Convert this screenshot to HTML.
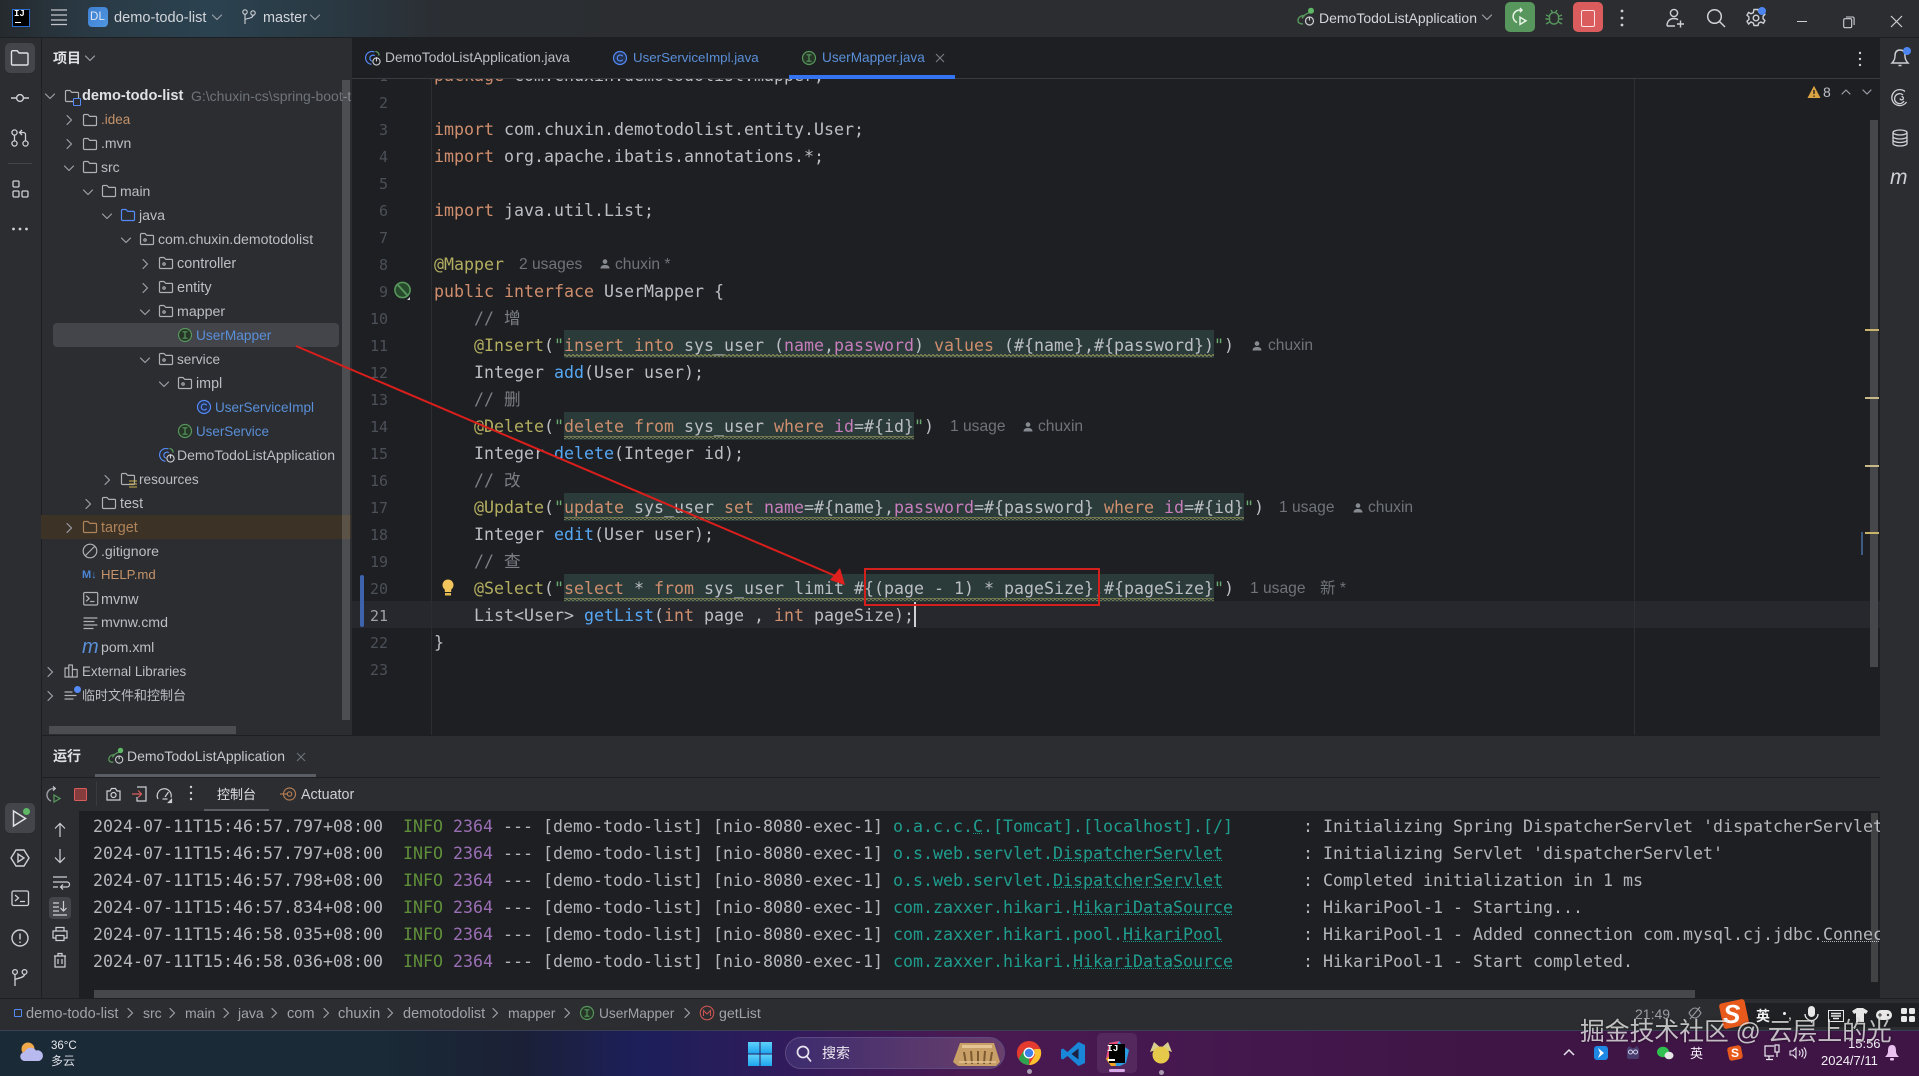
<!DOCTYPE html>
<html lang="zh"><head><meta charset="utf-8"><title>demo-todo-list</title>
<style>
html,body{margin:0;padding:0;width:1919px;height:1076px;overflow:hidden;background:#1e1f22}
body{position:relative;font-family:"Liberation Sans","Noto Sans CJK SC",sans-serif;font-size:14px;color:#bcbec4}
.b{position:absolute}
.t{position:absolute;white-space:pre;line-height:24px}
svg{position:absolute;overflow:visible}
.i{width:16px;height:16px;fill:none;stroke:#afb1b3;stroke-width:1.2;stroke-linecap:round;stroke-linejoin:round}
.c{width:16px;height:16px;fill:none;stroke:#9da0a8;stroke-width:1.2;stroke-linecap:round;stroke-linejoin:round}
.l{position:absolute;left:434px;height:27px;line-height:27px;white-space:pre;font-family:"DejaVu Sans Mono","Noto Sans CJK SC",monospace;font-size:16.62px;color:#bcbec4}
.n{position:absolute;left:352px;width:36px;text-align:right;height:27px;line-height:28px;font-family:"DejaVu Sans Mono",monospace;font-size:15px;color:#4b5059}
.k{color:#cf8e6d}.a{color:#b3ae60}.m{color:#56a8f5}.p{color:#c77dbb}.g{color:#6aab73}.co{color:#7a7e85}
.h{position:absolute;white-space:pre;height:27px;line-height:27px;font-size:15.6px;color:#6f737a}
.o{position:absolute;left:93px;height:27px;line-height:27px;white-space:pre;font-family:"DejaVu Sans Mono",monospace;font-size:16.62px;color:#b4b6bb}
.ci{color:#5f8f3a}.cp{color:#9a6fb5}.cc{color:#1f9d8f}.u{text-decoration:underline dotted 1px}
.s{position:absolute;top:1002px;line-height:24px;font-size:14px;color:#a0a3a9;white-space:pre}
</style></head><body>
<svg width="0" height="0" style="position:absolute"><defs>
<symbol id="fold" viewBox="0 0 16 16"><path d="M1.5 3.5a1 1 0 0 1 1-1h3.500l1.700 1.900h5.800a1 1 0 0 1 1 1v7.100a1 1 0 0 1-1 1H2.500a1 1 0 0 1-1-1z"/></symbol>
<symbol id="pkg" viewBox="0 0 16 16"><path d="M1.5 3.5a1 1 0 0 1 1-1h3.500l1.700 1.900h5.800a1 1 0 0 1 1 1v7.100a1 1 0 0 1-1 1H2.500a1 1 0 0 1-1-1z"/><circle cx="6" cy="9" r="1.2"/></symbol>
<symbol id="cr" viewBox="0 0 16 16"><path d="M6 3.500 10.500 8 6 12.500"/></symbol>
<symbol id="cd" viewBox="0 0 16 16"><path d="M3.500 6 8 10.500 12.500 6"/></symbol>
<symbol id="int" viewBox="0 0 16 16"><circle cx="8" cy="8" r="6.500" fill="#253627" stroke="#57965c" stroke-width="1.2"/><path d="M6 4.800h4M6 11.200h4M8 4.800v6.400" stroke="#57965c" stroke-width="1.2" fill="none"/></symbol>
<symbol id="cls" viewBox="0 0 16 16"><circle cx="8" cy="8" r="6.500" fill="#25324d" stroke="#548af7" stroke-width="1.2"/><path d="M10.400 5.900A3 3 0 1 0 10.400 10.100" stroke="#548af7" stroke-width="1.2" fill="none"/></symbol>
<symbol id="app" viewBox="0 0 16 16"><path d="M9 1.800A6.400 6.400 0 1 0 6 14.200" fill="none" stroke="#548af7" stroke-width="1.2"/><path d="M9.400 5.500A3 3 0 1 0 6.500 11" fill="none" stroke="#548af7" stroke-width="1.2"/><path d="M11 1.500a4 4 0 0 1 3 3.500" stroke="#57965c" stroke-width="1.4" fill="none"/><circle cx="11.500" cy="11.500" r="3.600" fill="none" stroke="#ced0d6" stroke-width="1.1"/><path d="M11.500 7.500v3.500" stroke="#ced0d6" stroke-width="1.1"/></symbol>
<symbol id="runapp" viewBox="0 0 20 20"><path d="M9 8.500C4 8.500 2 11 2 13.500s2 3.500 5 3.500" fill="none" stroke="#57965c" stroke-width="1.4"/><path d="M6 11.500c2-4 5-5 8-6" fill="none" stroke="#57965c" stroke-width="1.4"/><circle cx="15" cy="3.800" r="3" fill="#5fb865" stroke="none"/><circle cx="13.500" cy="14" r="4" fill="none" stroke="#ced0d6" stroke-width="1.2"/><path d="M13.500 9.500v4" stroke="#ced0d6" stroke-width="1.2"/></symbol>
<symbol id="user" viewBox="0 0 12 12"><circle cx="6" cy="3.600" r="2.300" fill="#868a91"/><path d="M1.500 10.500c0-2.600 2-3.500 4.500-3.500s4.500.9 4.500 3.500z" fill="#868a91"/></symbol>
<pattern id="wave" width="4" height="3" patternUnits="userSpaceOnUse"><path d="M0 1.500Q1 0 2 1.500T4 1.500" fill="none" stroke="#a9a35e" stroke-width=".9"/></pattern>
</defs></svg>

<!-- title bar -->
<div class="b" style="left:0;top:0;width:1919px;height:37px;background:linear-gradient(90deg,#252a2e 0,#2a3a45 90px,#2b4250 210px,#2a3a44 320px,#2b2e33 440px,#2b2d30 700px)"></div>
<div class="b" style="left:0;top:37px;width:1919px;height:1px;background:#1e1f22"></div>
<div class="b" style="left:12px;top:9px;width:16px;height:16px;background:#000;border:.5px solid #2d6fd0"></div>
<div class="t" style="left:14px;top:7px;font:bold 9px/14px 'Liberation Mono',monospace;color:#fff">IJ</div>
<div class="b" style="left:15px;top:22px;width:6px;height:1px;background:#fff"></div>
<svg style="left:51px;top:9px" width="16" height="16" fill="none" stroke="#c4c6cc" stroke-width="1.2"><path d="M0 1h16M0 6h16M0 11h16M0 15.500h16"/></svg>
<div class="b" style="left:88px;top:7px;width:20px;height:20px;border-radius:4px;background:linear-gradient(135deg,#3f7fd1,#4f96e0)"></div>
<div class="t" style="left:90px;top:5px;font-size:11.5px;color:#dfe8f5;letter-spacing:.2px">DL</div>
<div class="t" style="left:114px;top:6px;color:#d3d5db;font-size:14.6px">demo-todo-list</div>
<svg class="c" style="left:209px;top:9px"><use href="#cd"/></svg>
<svg style="left:242px;top:9px" width="14" height="16" fill="none" stroke="#ced0d6" stroke-width="1.1"><circle cx="3" cy="3" r="2.200"/><circle cx="11" cy="4" r="2.200"/><path d="M3 5.200V15M3 11c0-2 8-1 8-4.800"/></svg>
<div class="t" style="left:263px;top:6px;color:#d3d5db;font-size:14.4px">master</div>
<svg class="c" style="left:307px;top:9px"><use href="#cd"/></svg>

<svg style="left:1296px;top:7px" width="20" height="20"><use href="#runapp"/></svg>
<div class="t" style="left:1319px;top:6px;color:#d3d5db;font-size:14px">DemoTodoListApplication</div>
<svg class="c" style="left:1479px;top:9px"><use href="#cd"/></svg>
<div class="b" style="left:1505px;top:2px;width:30px;height:30px;border-radius:5px;background:#57965c"></div>
<svg style="left:1510px;top:7px" width="20" height="20" fill="none" stroke="#e6f2e6" stroke-width="1.5"><path d="M11 3.200A6.500 6.500 0 0 0 7 15.500"/><path d="M10 1l2 2.200-2.200 2"/><path d="M10 10.200l6 3.600-6 3.600z"/></svg>
<svg style="left:1545px;top:8px" width="18" height="18" fill="none" stroke="#57965c" stroke-width="1.4"><rect x="4.500" y="4.500" width="9" height="11.500" rx="4.200"/><path d="M6 2l1.500 2.500M12 2l-1.500 2.500M1 7l3.500 1.500M17 7l-3.500 1.500M.5 11h4M17.500 11h-4M1 16l3.500-2M17 16l-3.500-2"/></svg>
<div class="b" style="left:1573px;top:2px;width:30px;height:30px;border-radius:5px;background:#db5c5c"></div>
<div class="b" style="left:1581px;top:10px;width:12px;height:15px;border:1.4px solid #f7e4e4;border-radius:2px"></div>
<svg style="left:1616px;top:8px" width="12" height="20" fill="#ced0d6"><circle cx="6" cy="3" r="1.400"/><circle cx="6" cy="10" r="1.400"/><circle cx="6" cy="17" r="1.400"/></svg>
<svg style="left:1666px;top:8px" width="20" height="20" fill="none" stroke="#ced0d6" stroke-width="1.4"><circle cx="8" cy="5" r="3.600"/><path d="M1 18c0-5 3-7.500 7-7.500 1.500 0 3 .4 4 1.200M1 18h8M14.500 12.500v7M11 16h7"/></svg>
<svg style="left:1706px;top:8px" width="20" height="20" fill="none" stroke="#ced0d6" stroke-width="1.5"><circle cx="8.500" cy="8.500" r="6.800"/><path d="M13.500 13.500l5.500 5.500"/></svg>
<svg style="left:1746px;top:8px" width="20" height="20" fill="none" stroke="#ced0d6" stroke-width="1.4"><path d="M8 1.500h4l.7 2.500 2.400 1 2.300-1.300 1.500 2.700-1.800 1.800v2.600l1.800 1.800-1.500 2.700-2.300-1.300-2.400 1-.7 2.500H8l-.7-2.500-2.400-1L2.600 16 1 13.300 2.900 11.500V8.900L1 7.100 2.600 4.400 4.900 5.700l2.400-1z"/><circle cx="10" cy="10" r="2.800"/></svg>
<div class="b" style="left:1758px;top:7px;width:8px;height:8px;border-radius:50%;background:#4d85f0"></div>
<div class="b" style="left:1797px;top:21px;width:10px;height:1.3px;background:#ced0d6"></div>
<svg style="left:1843px;top:16px" width="12" height="12" fill="none" stroke="#ced0d6" stroke-width="1.1"><rect x=".7" y="2.700" width="8" height="9" rx="1.400"/><path d="M3 1h6.600a1.500 1.500 0 0 1 1.500 1.500V9"/></svg>
<svg style="left:1891px;top:16px" width="11" height="11" fill="none" stroke="#ced0d6" stroke-width="1.2"><path d="M0 0l11 11M11 0L0 11"/></svg>

<!-- left stripe -->
<div class="b" style="left:0;top:38px;width:41px;height:960px;background:#2b2d30"></div>
<div class="b" style="left:41px;top:38px;width:1px;height:960px;background:#1e1f22"></div>
<div class="b" style="left:5px;top:43px;width:30px;height:30px;border-radius:5px;background:#43454a"></div>
<svg style="left:10px;top:49px" width="20" height="18" fill="none" stroke="#dfe1e5" stroke-width="1.4"><path d="M1.500 3a1.300 1.300 0 0 1 1.300-1.300h4.300l2 2.300h7.600A1.300 1.300 0 0 1 18 5.300v9.400A1.300 1.300 0 0 1 16.700 16H2.800a1.300 1.300 0 0 1-1.300-1.300z"/></svg>
<svg style="left:10px;top:88px" width="20" height="20" fill="none" stroke="#ced0d6" stroke-width="1.4"><circle cx="10" cy="10" r="3.400"/><path d="M1 10h5.600M13.400 10H19"/></svg>
<svg style="left:11px;top:129px" width="18" height="18" fill="none" stroke="#ced0d6" stroke-width="1.3"><circle cx="3.500" cy="3.500" r="2.600"/><circle cx="3.500" cy="14.500" r="2.600"/><circle cx="14.500" cy="14.500" r="2.600"/><path d="M3.500 6.200v5.600M14.500 12V5.500a2 2 0 0 0-2-2H9M11 1L8.500 3.500 11 6"/></svg>
<div class="b" style="left:8px;top:163px;width:24px;height:1px;background:#43454a"></div>
<svg style="left:11px;top:180px" width="18" height="18" fill="none" stroke="#ced0d6" stroke-width="1.3"><rect x="2" y="1" width="6" height="6" rx="1.200"/><rect x="2" y="11" width="6" height="6" rx="1.200"/><rect x="11" y="11" width="6" height="6" rx="1.200"/></svg>
<svg style="left:11px;top:226px" width="18" height="6" fill="#ced0d6"><circle cx="2.500" cy="3" r="1.400"/><circle cx="9" cy="3" r="1.400"/><circle cx="15.500" cy="3" r="1.400"/></svg>

<div class="b" style="left:5px;top:803px;width:30px;height:30px;border-radius:5px;background:#43454a"></div>
<svg style="left:12px;top:809px" width="20" height="20" fill="none" stroke="#dfe1e5" stroke-width="1.5"><path d="M1.500 2v15l12-7.500z"/></svg>
<div class="b" style="left:23px;top:808px;width:7px;height:7px;border-radius:50%;background:#5fb865"></div>
<svg style="left:10px;top:848px" width="20" height="20" fill="none" stroke="#ced0d6" stroke-width="1.4"><path d="M6 2h8l5 8-5 8H6L1 10z"/><path d="M8 6v8l6-4z"/></svg>
<svg style="left:11px;top:889px" width="18" height="18" fill="none" stroke="#ced0d6" stroke-width="1.3"><rect x="1" y="2" width="16.500" height="14.500" rx="1.500"/><path d="M4 6l3.500 3L4 12M9 12.500h5"/></svg>
<svg style="left:11px;top:929px" width="18" height="18" fill="none" stroke="#ced0d6" stroke-width="1.4"><circle cx="9" cy="9" r="8"/><path d="M9 4.500v6M9 12.500v1.500"/></svg>
<svg style="left:12px;top:969px" width="16" height="18" fill="none" stroke="#ced0d6" stroke-width="1.3"><circle cx="3" cy="3" r="2.400"/><circle cx="12.500" cy="3" r="2.400"/><path d="M3 5.400V17M3 11c0-2 9.500-1.500 9.500-5.600"/></svg>

<!-- project panel -->
<div class="b" style="left:42px;top:38px;width:310px;height:697px;background:#2b2d30"></div>
<div class="t" style="left:53px;top:46px;font-weight:bold;color:#dfe1e5;font-size:14px">项目</div>
<svg class="c" style="left:82px;top:50px"><use href="#cd"/></svg>
<div class="b" style="left:41px;top:515px;width:310px;height:24px;background:#3c3226"></div>
<div class="b" style="left:53px;top:323px;width:286px;height:24px;border-radius:4px;background:#43454a"></div>
<div class="b" style="left:49px;top:726px;width:187px;height:8px;background:#4b4d51"></div>

<div class="b" style="left:0;top:1px">
<svg class="c" style="left:42px;top:87px"><use href="#cd"/></svg><svg class="i" style="left:64px;top:87px"><use href="#fold"/></svg><div class="b" style="left:73px;top:97px;width:6px;height:6px;border:1px solid #548af7;border-radius:1px;background:#2b2d30"></div>
<div class="t" style="left:82px;top:83px;font-weight:bold;color:#dfe1e5;font-size:14.6px">demo-todo-list</div><div class="t" style="left:191px;top:83px;color:#6f737a;width:160px;overflow:hidden;font-size:14px">G:\chuxin-cs\spring-boot-todo</div>
<svg class="c" style="left:61px;top:111px"><use href="#cr"/></svg><svg class="i" style="left:82px;top:111px"><use href="#fold"/></svg><div class="t" style="left:101px;top:107px;color:#c5926a;font-size:13.5px">.idea</div>
<svg class="c" style="left:61px;top:135px"><use href="#cr"/></svg><svg class="i" style="left:82px;top:135px"><use href="#fold"/></svg><div class="t" style="left:101px;top:130px;font-size:14px">.mvn</div>
<svg class="c" style="left:61px;top:159px"><use href="#cd"/></svg><svg class="i" style="left:82px;top:158px"><use href="#fold"/></svg><div class="t" style="left:101px;top:154px;font-size:14px">src</div>
<svg class="c" style="left:80px;top:183px"><use href="#cd"/></svg><svg class="i" style="left:101px;top:182px"><use href="#fold"/></svg><div class="t" style="left:120px;top:178px;font-size:14px">main</div>
<svg class="c" style="left:99px;top:207px"><use href="#cd"/></svg><svg class="i" style="left:120px;top:206px;stroke:#548af7"><use href="#fold"/></svg><div class="t" style="left:139px;top:203px;font-size:14.2px">java</div>
<svg class="c" style="left:118px;top:231px"><use href="#cd"/></svg><svg class="i" style="left:139px;top:230px"><use href="#pkg"/></svg><div class="t" style="left:158px;top:226px;font-size:14.1px">com.chuxin.demotodolist</div>
<svg class="c" style="left:137px;top:255px"><use href="#cr"/></svg><svg class="i" style="left:158px;top:254px"><use href="#pkg"/></svg><div class="t" style="left:177px;top:251px;font-size:14.4px">controller</div>
<svg class="c" style="left:137px;top:279px"><use href="#cr"/></svg><svg class="i" style="left:158px;top:278px"><use href="#pkg"/></svg><div class="t" style="left:177px;top:275px;font-size:14.5px">entity</div>
<svg class="c" style="left:137px;top:303px"><use href="#cd"/></svg><svg class="i" style="left:158px;top:302px"><use href="#pkg"/></svg><div class="t" style="left:177px;top:299px;font-size:14.2px">mapper</div>
<svg class="i" style="left:177px;top:326px"><use href="#int"/></svg><div class="t" style="left:196px;top:323px;color:#5a8fd8;font-size:13.7px">UserMapper</div>
<svg class="c" style="left:137px;top:351px"><use href="#cd"/></svg><svg class="i" style="left:158px;top:350px"><use href="#pkg"/></svg><div class="t" style="left:177px;top:347px;font-size:13.6px">service</div>
<svg class="c" style="left:156px;top:375px"><use href="#cd"/></svg><svg class="i" style="left:177px;top:374px"><use href="#pkg"/></svg><div class="t" style="left:196px;top:371px;font-size:14.3px">impl</div>
<svg class="i" style="left:196px;top:398px"><use href="#cls"/></svg><div class="t" style="left:215px;top:395px;color:#5a8fd8;font-size:13.5px">UserServiceImpl</div>
<svg class="i" style="left:177px;top:422px"><use href="#int"/></svg><div class="t" style="left:196px;top:419px;color:#5a8fd8;font-size:13.4px">UserService</div>
<svg class="i" style="left:159px;top:446px"><use href="#app"/></svg><div class="t" style="left:177px;top:442px;font-size:14px">DemoTodoListApplication</div>
<svg class="c" style="left:99px;top:471px"><use href="#cr"/></svg><svg class="i" style="left:120px;top:470px"><use href="#fold"/></svg><svg style="left:129px;top:479px" width="8" height="8" stroke="#c9b04d" stroke-width="1"><path d="M0 1h8M0 4h8M0 7h8"/></svg><div class="t" style="left:139px;top:467px;font-size:13.6px">resources</div>
<svg class="c" style="left:80px;top:495px"><use href="#cr"/></svg><svg class="i" style="left:101px;top:494px"><use href="#fold"/></svg><div class="t" style="left:120px;top:491px;font-size:14.3px">test</div>
<svg class="c" style="left:61px;top:519px"><use href="#cr"/></svg><svg class="i" style="left:82px;top:518px;stroke:#b0845a"><use href="#fold"/></svg><div class="t" style="left:101px;top:515px;color:#b0845a;font-size:14.4px">target</div>
<svg class="i" style="left:82px;top:542px"><circle cx="8" cy="8" r="6.800"/><path d="M3.500 12.500l9-9"/></svg><div class="t" style="left:101px;top:538px;font-size:14.1px">.gitignore</div>
<div class="t" style="left:82px;top:562px;font:bold 11px/24px 'Liberation Sans',sans-serif;color:#4d85d8">M↓</div><div class="t" style="left:101px;top:562px;color:#c5926a;font-size:13.2px">HELP.md</div>
<svg class="i" style="left:83px;top:590px"><rect x=".7" y="1.500" width="14" height="12.500" rx="1.300"/><path d="M3.500 5l2.700 2.500L3.500 10M7.500 10.500h3.500"/></svg><div class="t" style="left:101px;top:587px;font-size:14.4px">mvnw</div>
<svg class="i" style="left:83px;top:614px"><path d="M1 3h13M1 6.500h10M1 10h13M1 13.500h9"/></svg><div class="t" style="left:101px;top:610px;font-size:14.2px">mvnw.cmd</div>
<div class="t" style="left:82px;top:634px;font:italic 20px/24px 'Liberation Sans',sans-serif;color:#5a8fd8">m</div><div class="t" style="left:101px;top:634px;font-size:14.1px">pom.xml</div>
<svg class="c" style="left:42px;top:663px"><use href="#cr"/></svg><svg class="i" style="left:64px;top:662px"><path d="M1 5h3.800v9H1zM4.800 2h3.600v12H4.800zM8.400 6.500h4.800V14H8.400z"/></svg><div class="t" style="left:82px;top:659px;font-size:13.4px">External Libraries</div>
<svg class="c" style="left:42px;top:687px"><use href="#cr"/></svg><svg class="i" style="left:64px;top:686px"><path d="M1 5h7M1 8.500h11M1 12h8"/></svg><div class="b" style="left:74px;top:685px;width:7px;height:7px;border-radius:50%;background:#548af7"></div><div class="t" style="left:82px;top:683px;font-size:13px">临时文件和控制台</div>
</div>
<div class="b" style="left:342px;top:80px;width:8px;height:640px;background:rgba(255,255,255,.16)"></div>

<!-- tabs -->
<div class="b" style="left:352px;top:38px;width:1528px;height:40px;background:#1e1f22"></div>
<div class="b" style="left:352px;top:78px;width:1528px;height:1px;background:#393b40"></div>
<svg class="i" style="left:365px;top:50px"><use href="#app"/></svg><div class="t" style="left:385px;top:46px;color:#bcbec4;font-size:13.8px">DemoTodoListApplication.java</div>
<svg class="i" style="left:612px;top:50px"><use href="#cls"/></svg><div class="t" style="left:633px;top:46px;color:#5a8fd8;font-size:13.3px">UserServiceImpl.java</div>
<svg class="i" style="left:801px;top:50px"><use href="#int"/></svg><div class="t" style="left:822px;top:46px;color:#5a8fd8;font-size:13.6px">UserMapper.java</div>
<svg style="left:936px;top:54px" width="8" height="8" fill="none" stroke="#7a7e85" stroke-width="1.1"><path d="M0 0l8 8M8 0L0 8"/></svg>
<div class="b" style="left:789px;top:75px;width:166px;height:4px;background:#3574f0"></div>
<svg style="left:1856px;top:51px" width="8" height="16" fill="#ced0d6"><circle cx="4" cy="2" r="1.200"/><circle cx="4" cy="8" r="1.200"/><circle cx="4" cy="14" r="1.200"/></svg>

<!-- right stripe -->
<div class="b" style="left:1880px;top:38px;width:39px;height:960px;background:#2b2d30"></div>
<svg style="left:1890px;top:48px" width="20" height="20" fill="none" stroke="#ced0d6" stroke-width="1.4"><path d="M10 2C6 2 5 5 5 8c0 3-1 5-3 7h16c-2-2-3-4-3-7 0-3-1-6-5-6zM8.500 17.500h3"/></svg>
<div class="b" style="left:1903px;top:47px;width:8px;height:8px;border-radius:50%;background:#4d85f0"></div>
<svg style="left:1891px;top:89px" width="18" height="18" fill="none" stroke="#ced0d6" stroke-width="1.3"><path d="M14 2.500A8 8 0 1 0 15.500 13M12 6a5 5 0 1 0 1 6M9 9.500a1.700 1.700 0 1 0 1.500-2"/></svg>
<svg style="left:1892px;top:129px" width="16" height="18" fill="none" stroke="#ced0d6" stroke-width="1.3"><ellipse cx="8" cy="3.500" rx="7" ry="2.500"/><path d="M1 3.500v11c0 1.400 3.100 2.500 7 2.500s7-1.100 7-2.500v-11M1 7.500c0 1.400 3.100 2.500 7 2.500s7-1.100 7-2.500M1 11c0 1.400 3.100 2.500 7 2.500s7-1.100 7-2.500"/></svg>
<div class="t" style="left:1890px;top:166px;font:italic 21px/24px 'Liberation Sans',sans-serif;color:#ced0d6">m</div>

<!-- editor -->
<div class="b" style="left:352px;top:79px;width:1528px;height:656px;background:#1e1f22"></div>
<div class="b" style="left:352px;top:601px;width:1528px;height:27px;background:#26282e"></div>
<div class="b" style="left:431px;top:79px;width:1px;height:656px;background:#2b2d30"></div>
<div class="b" style="left:1634px;top:79px;width:1px;height:656px;background:#2e3034"></div>
<svg width="1919" height="1076" style="left:0;top:0;pointer-events:none">
<g fill="#2a3b3a"><rect x="564" y="330" width="650" height="28"/><rect x="564" y="412" width="350" height="28"/><rect x="564" y="493" width="680" height="28"/><rect x="564" y="574" width="650" height="28"/></g>
<g fill="url(#wave)"><rect x="564" y="354" width="650" height="3"/><rect x="564" y="436" width="350" height="3"/><rect x="564" y="517" width="680" height="3"/><rect x="564" y="598" width="650" height="3"/></g>
</svg>
<div class="b" style="left:360px;top:575px;width:4px;height:52px;border-radius:2px;background:#3d63ad"></div>

<div class="b" style="left:0;top:1px;width:1919px;height:734px;overflow:hidden;clip-path:inset(78px 0 0 0)">
<div class="n" style="top:61px">1</div><div class="n" style="top:88px">2</div><div class="n" style="top:115px">3</div><div class="n" style="top:142px">4</div><div class="n" style="top:169px">5</div><div class="n" style="top:196px">6</div><div class="n" style="top:223px">7</div><div class="n" style="top:250px">8</div><div class="n" style="top:277px">9</div><div class="n" style="top:304px">10</div><div class="n" style="top:331px">11</div><div class="n" style="top:358px">12</div><div class="n" style="top:385px">13</div><div class="n" style="top:412px">14</div><div class="n" style="top:439px">15</div><div class="n" style="top:466px">16</div><div class="n" style="top:493px">17</div><div class="n" style="top:520px">18</div><div class="n" style="top:547px">19</div><div class="n" style="top:574px">20</div><div class="n" style="top:601px;color:#a1a3ab">21</div><div class="n" style="top:628px">22</div><div class="n" style="top:655px">23</div>

<div class="l" style="top:61px"><span class="k">package</span> com.chuxin.demotodolist.mapper;</div>
<div class="l" style="top:115px"><span class="k">import</span> com.chuxin.demotodolist.entity.User;</div>
<div class="l" style="top:142px"><span class="k">import</span> org.apache.ibatis.annotations.*;</div>
<div class="l" style="top:196px"><span class="k">import</span> java.util.List;</div>
<div class="l" style="top:250px"><span class="a">@Mapper</span></div>
<div class="h" style="left:519px;top:250px">2 usages</div><svg style="left:599px;top:257px" width="12" height="12"><use href="#user"/></svg><div class="h" style="left:615px;top:250px">chuxin *</div>
<div class="l" style="top:277px"><span class="k">public interface</span> UserMapper {</div>
<div class="l" style="top:304px"><span class="co">    // 增</span></div>
<div class="l" style="top:331px">    <span class="a">@Insert</span>(<span class="g">"</span><span class="k">insert into</span> sys_user (<span class="p">name</span>,<span class="p">password</span>) <span class="k">values</span> (#{name},#{password})<span class="g">"</span>)</div>
<svg style="left:1251px;top:339px" width="12" height="12"><use href="#user"/></svg><div class="h" style="left:1268px;top:331px">chuxin</div>
<div class="l" style="top:358px">    Integer <span class="m">add</span>(User user);</div>
<div class="l" style="top:385px"><span class="co">    // 删</span></div>
<div class="l" style="top:412px">    <span class="a">@Delete</span>(<span class="g">"</span><span class="k">delete from</span> sys_user <span class="k">where</span> <span class="p">id</span>=#{id}<span class="g">"</span>)</div>
<div class="h" style="left:950px;top:412px">1 usage</div><svg style="left:1022px;top:420px" width="12" height="12"><use href="#user"/></svg><div class="h" style="left:1038px;top:412px">chuxin</div>
<div class="l" style="top:439px">    Integer <span class="m">delete</span>(Integer id);</div>
<div class="l" style="top:466px"><span class="co">    // 改</span></div>
<div class="l" style="top:493px">    <span class="a">@Update</span>(<span class="g">"</span><span class="k">update</span> sys_user <span class="k">set</span> <span class="p">name</span>=#{name},<span class="p">password</span>=#{password} <span class="k">where</span> <span class="p">id</span>=#{id}<span class="g">"</span>)</div>
<div class="h" style="left:1279px;top:493px">1 usage</div><svg style="left:1352px;top:501px" width="12" height="12"><use href="#user"/></svg><div class="h" style="left:1368px;top:493px">chuxin</div>
<div class="l" style="top:520px">    Integer <span class="m">edit</span>(User user);</div>
<div class="l" style="top:547px"><span class="co">    // 查</span></div>
<div class="l" style="top:574px">    <span class="a">@Select</span>(<span class="g">"</span><span class="k">select</span> * <span class="k">from</span> sys_user limit #{(page - 1) * pageSize},#{pageSize}<span class="g">"</span>)</div>
<div class="h" style="left:1250px;top:574px">1 usage</div><div class="h" style="left:1320px;top:574px">新 *</div>
<div class="l" style="top:601px">    List&lt;User&gt; <span class="m">getList</span>(<span class="k">int</span> page , <span class="k">int</span> pageSize);</div>
<div class="l" style="top:628px">}</div>
</div>
<div class="b" style="left:914px;top:602px;width:1.5px;height:25px;background:#ced0d6"></div>

<svg style="left:394px;top:281px" width="20" height="22" fill="none"><circle cx="8.500" cy="9" r="7.600" fill="#274a2c" stroke="#57965c" stroke-width="1.6"/><path d="M3.500 3.500l10 11" stroke="#57965c" stroke-width="2"/><path d="M16 16v3h-3z" fill="#ced0d6"/></svg>
<svg style="left:441px;top:579px" width="14" height="18"><path d="M7 .5a5.500 5.500 0 0 1 3.200 10v2.500H3.800v-2.500A5.500 5.500 0 0 1 7 .5z" fill="#f2c55c"/><rect x="4" y="14" width="6" height="2.500" fill="#e0b84f"/></svg>

<!-- warnings -->
<svg style="left:1807px;top:85px" width="14" height="14"><path d="M7 .8 13.500 13H.5z" fill="#d9a343"/><path d="M7 5v4M7 10.500v1.200" stroke="#1e1f22" stroke-width="1.400"/></svg>
<div class="t" style="left:1823px;top:80px;color:#bcbec4;font-size:14px">8</div>
<svg class="c" style="left:1838px;top:84px"><path d="M4 10l4-4 4 4"/></svg>
<svg class="c" style="left:1859px;top:84px"><path d="M4 6l4 4 4-4"/></svg>

<!-- editor scrollbar -->
<div class="b" style="left:1870px;top:120px;width:8px;height:547px;background:#45474b"></div>
<div class="b" style="left:1865px;top:329px;width:14px;height:2px;background:#c9b26a"></div>
<div class="b" style="left:1865px;top:397px;width:14px;height:2px;background:#c9b98a"></div>
<div class="b" style="left:1865px;top:465px;width:14px;height:2px;background:#c9b98a"></div>
<div class="b" style="left:1865px;top:532px;width:14px;height:2px;background:#c9b26a"></div>
<div class="b" style="left:1861px;top:532px;width:2px;height:23px;background:#3d5a80"></div>

<!-- bottom panel -->
<div class="b" style="left:42px;top:735px;width:1838px;height:76px;background:#2b2d30"></div>
<div class="b" style="left:42px;top:735px;width:1838px;height:1px;background:#1e1f22"></div>
<div class="b" style="left:42px;top:777px;width:1838px;height:1px;background:#1e1f22"></div>
<div class="t" style="left:53px;top:744px;font-weight:bold;color:#dfe1e5;font-size:14px">运行</div>
<svg style="left:107px;top:747px" width="18" height="18"><use href="#runapp"/></svg>
<div class="t" style="left:127px;top:744px;color:#c6c8cd;font-size:14px">DemoTodoListApplication</div>
<svg style="left:297px;top:753px" width="8" height="8" fill="none" stroke="#6f737a" stroke-width="1.1"><path d="M0 0l8 8M8 0L0 8"/></svg>
<div class="b" style="left:95px;top:774px;width:221px;height:3px;background:#5a5d63"></div>

<svg style="left:46px;top:786px" width="16" height="18" fill="none" stroke-width="1.3"><path d="M8 2.500A6.500 6.500 0 0 0 5 15" stroke="#9da0a8"/><path d="M7 .5l2.200 2-2.200 2" stroke="#ced0d6"/><path d="M8 9l6 3.500-6 3.500z" stroke="#57965c"/></svg>
<div class="b" style="left:74px;top:788px;width:11px;height:11px;border:1.3px solid #db5c5c;background:#843c3c;border-radius:1.5px"></div>
<div class="b" style="left:96px;top:782px;width:1px;height:24px;background:#393b40"></div>
<svg style="left:106px;top:787px" width="15" height="14" fill="none" stroke="#ced0d6" stroke-width="1.2"><path d="M1 4h3l1.500-2.500h4L11 4h3v9H1z"/><circle cx="7.500" cy="8" r="2.500"/></svg>
<svg style="left:132px;top:786px" width="15" height="16" fill="none" stroke-width="1.2"><path d="M5 1h9v14H5V11" stroke="#ced0d6"/><path d="M0 8h9M6 4.500 9.500 8 6 11.500" stroke="#db5c5c"/></svg>
<svg style="left:157px;top:787px" width="17" height="16" fill="none" stroke="#ced0d6" stroke-width="1.2"><path d="M1 12a7 7 0 1 1 13-1.500M5.500 12h5M8 10l3.500-5"/><path d="M14.500 12.500v3h-3z" fill="#ced0d6"/></svg>
<svg style="left:187px;top:785px" width="8" height="16" fill="#ced0d6"><circle cx="4" cy="2" r="1.200"/><circle cx="4" cy="8" r="1.200"/><circle cx="4" cy="14" r="1.200"/></svg>
<div class="t" style="left:217px;top:783px;font-size:13px;color:#dfe1e5">控制台</div>
<div class="b" style="left:204px;top:809px;width:65px;height:3px;background:#5a5d63"></div>
<svg style="left:280px;top:786px" width="16" height="16" fill="none" stroke="#b37b52" stroke-width="1.2"><circle cx="9.500" cy="8" r="6"/><circle cx="9.500" cy="8" r="2.200"/><path d="M0 8h7"/></svg>
<div class="t" style="left:301px;top:783px;color:#ced0d6;font-size:14.3px">Actuator</div>

<!-- console -->
<div class="b" style="left:42px;top:811px;width:37px;height:187px;background:#2b2d30"></div>
<div class="b" style="left:79px;top:811px;width:1801px;height:187px;background:#1e1f22"></div>
<svg style="left:54px;top:822px" width="12" height="16" fill="none" stroke="#ced0d6" stroke-width="1.2"><path d="M6 15V2M1 6.500 6 1.500l5 5"/></svg>
<svg style="left:54px;top:848px" width="12" height="16" fill="none" stroke="#ced0d6" stroke-width="1.2"><path d="M6 1v13M1 9.500l5 5 5-5"/></svg>
<svg style="left:52px;top:876px" width="16" height="14" fill="none" stroke="#ced0d6" stroke-width="1.2"><path d="M1 1h14M1 6h14a2.500 2.500 0 0 1 0 5H9M11 8.500 8.500 11l2.500 2.500M1 11h5"/></svg>
<div class="b" style="left:49px;top:897px;width:22px;height:22px;border-radius:4px;background:#43454a"></div>
<svg style="left:52px;top:900px" width="16" height="16" fill="none" stroke="#ced0d6" stroke-width="1.2"><path d="M1 3h6M1 7h6M1 11h6M1 15h14M11.500 1v10M8.500 8l3 3 3-3"/></svg>
<svg style="left:52px;top:926px" width="16" height="16" fill="none" stroke="#ced0d6" stroke-width="1.2"><path d="M4 5V1.500h8V5M4 12H1V5h14v7h-3M4 9.500h8v5H4z"/></svg>
<svg style="left:53px;top:952px" width="14" height="16" fill="none" stroke="#ced0d6" stroke-width="1.2"><path d="M1 4h12M5 4V1.500h4V4M2 4v11h10V4M5 7v5M9 7v5"/></svg>

<div class="b" style="left:79px;top:812px;width:1801px;height:178px;overflow:hidden">
<div class="o" style="left:14px;top:1px">2024-07-11T15:46:57.797+08:00  <span class="ci">INFO</span> <span class="cp">2364</span> --- [demo-todo-list] [nio-8080-exec-1] <span class="cc">o.a.c.c.<span class="u">C</span>.[Tomcat].[localhost].[/]</span>       : Initializing Spring DispatcherServlet 'dispatcherServlet'</div>
<div class="o" style="left:14px;top:28px">2024-07-11T15:46:57.797+08:00  <span class="ci">INFO</span> <span class="cp">2364</span> --- [demo-todo-list] [nio-8080-exec-1] <span class="cc">o.s.web.servlet.<span class="u">DispatcherServlet</span></span>        : Initializing Servlet 'dispatcherServlet'</div>
<div class="o" style="left:14px;top:55px">2024-07-11T15:46:57.798+08:00  <span class="ci">INFO</span> <span class="cp">2364</span> --- [demo-todo-list] [nio-8080-exec-1] <span class="cc">o.s.web.servlet.<span class="u">DispatcherServlet</span></span>        : Completed initialization in 1 ms</div>
<div class="o" style="left:14px;top:82px">2024-07-11T15:46:57.834+08:00  <span class="ci">INFO</span> <span class="cp">2364</span> --- [demo-todo-list] [nio-8080-exec-1] <span class="cc">com.zaxxer.hikari.<span class="u">HikariDataSource</span></span>       : HikariPool-1 - Starting...</div>
<div class="o" style="left:14px;top:109px">2024-07-11T15:46:58.035+08:00  <span class="ci">INFO</span> <span class="cp">2364</span> --- [demo-todo-list] [nio-8080-exec-1] <span class="cc">com.zaxxer.hikari.pool.<span class="u">HikariPool</span></span>        : HikariPool-1 - Added connection com.mysql.cj.jdbc.<span class="u">Connection</span>@1a2b3c</div>
<div class="o" style="left:14px;top:136px">2024-07-11T15:46:58.036+08:00  <span class="ci">INFO</span> <span class="cp">2364</span> --- [demo-todo-list] [nio-8080-exec-1] <span class="cc">com.zaxxer.hikari.<span class="u">HikariDataSource</span></span>       : HikariPool-1 - Start completed.</div>
</div>
<div class="b" style="left:1871px;top:813px;width:7px;height:169px;background:rgba(255,255,255,.16)"></div>
<div class="b" style="left:94px;top:990px;width:1601px;height:8px;background:#45474b"></div>

<!-- status bar -->
<div class="b" style="left:0;top:998px;width:1919px;height:32px;background:#2b2d30;border-top:1px solid #1e1f22;box-sizing:border-box"></div>
<div class="b" style="left:14px;top:1009px;width:6px;height:6px;border:1px solid #548af7;border-radius:1px"></div>
<div class="s" style="left:26px;font-size:14.6px">demo-todo-list</div><svg class="c" style="left:122px;top:1005px"><use href="#cr"/></svg>
<div class="s" style="left:143px;top:1001px">src</div><svg class="c" style="left:164px;top:1005px"><use href="#cr"/></svg>
<div class="s" style="left:185px;top:1001px">main</div><svg class="c" style="left:218px;top:1005px"><use href="#cr"/></svg>
<div class="s" style="left:238px;top:1001px">java</div><svg class="c" style="left:266px;top:1005px"><use href="#cr"/></svg>
<div class="s" style="left:287px;font-size:14.6px">com</div><svg class="c" style="left:318px;top:1005px"><use href="#cr"/></svg>
<div class="s" style="left:338px;font-size:14.6px">chuxin</div><svg class="c" style="left:382px;top:1005px"><use href="#cr"/></svg>
<div class="s" style="left:403px;font-size:14.5px">demotodolist</div><svg class="c" style="left:487px;top:1005px"><use href="#cr"/></svg>
<div class="s" style="left:508px;top:1001px">mapper</div><svg class="c" style="left:559px;top:1005px"><use href="#cr"/></svg>
<svg class="i" style="left:579px;top:1005px"><use href="#int"/></svg><div class="s" style="left:599px;font-size:13.7px">UserMapper</div><svg class="c" style="left:679px;top:1005px"><use href="#cr"/></svg>
<svg style="left:699px;top:1005px" width="16" height="16" fill="none" stroke="#c75450" stroke-width="1.1"><circle cx="8" cy="8" r="6.800"/><path d="M4.500 11V5.500L8 9l3.500-3.500V11"/></svg><div class="s" style="left:719px;font-size:14.2px">getList</div>
<div class="s" style="left:1635px;color:#9a9da3;font-size:14px;top:1002px">21:49</div>
<svg style="left:1688px;top:1006px" width="14" height="14" fill="none" stroke="#9a9da3" stroke-width="1.1"><path d="M1 7c2-3.500 4-5 6-5s4 1.500 6 5c-2 3.500-4 5-6 5s-4-1.500-6-5zM2 13 12 1"/></svg>

<!-- taskbar -->
<div class="b" style="left:0;top:1030px;width:1919px;height:46px;background:linear-gradient(90deg,#1a2a36 0,#1a2a36 380px,#1b2036 520px,#1c1f5a 640px,#331b5c 800px,#4a1a52 960px,#461850 1150px,#3e1544 1500px,#3e1544 1919px);border-top:1px solid #3a3f55;box-sizing:border-box"></div>
<svg style="left:20px;top:1042px" width="24" height="20"><circle cx="8" cy="7" r="6.500" fill="#f0a848"/><path d="M5 19a4.500 4.500 0 0 1-.5-9A6.500 6.500 0 0 1 16 8.500 5.300 5.300 0 0 1 19 19z" fill="#b8b9ee"/></svg>
<div class="t" style="left:51px;top:1039px;font-size:11.5px;line-height:14px;color:#e8e8ee">36°C</div>
<div class="t" style="left:51px;top:1054px;font-size:12px;line-height:14px;color:#dcdce4">多云</div>

<svg style="left:748px;top:1042px" width="24" height="24"><defs><linearGradient id="w" x1="0" y1="0" x2="0" y2="1"><stop offset="0" stop-color="#5fd2fa"/><stop offset="1" stop-color="#1fa5ee"/></linearGradient></defs><rect width="11.500" height="11.500" fill="url(#w)"/><rect x="12.500" width="11.500" height="11.500" fill="url(#w)"/><rect y="12.500" width="11.500" height="11.500" fill="url(#w)"/><rect x="12.500" y="12.500" width="11.500" height="11.500" fill="url(#w)"/></svg>
<div class="b" style="left:785px;top:1037px;width:220px;height:32px;border-radius:16px;background:linear-gradient(90deg,#3d2c6e,#6a3f6c);border:1px solid #5c4a80;box-sizing:border-box"></div>
<svg style="left:796px;top:1045px" width="16" height="18" fill="none" stroke="#e8e4ef" stroke-width="1.7"><circle cx="7" cy="7" r="5.500"/><path d="M11 11.500l4 5"/></svg>
<div class="t" style="left:822px;top:1041px;font-size:14px;color:#ece8f2">搜索</div>
<svg style="left:952px;top:1040px" width="50" height="27"><path d="M8 3h34l6 19-4 4H6l-5-4z" fill="#c99f68"/><path d="M10 5h30v3H10z" fill="#e4c492"/><path d="M12 12l2 12M19 11l1 13M26 11v13M33 11l-1 13M40 12l-2 12" stroke="#7d5a30" stroke-width="2" fill="none"/><path d="M7 22h37" stroke="#e4c492" stroke-width="1.500"/></svg>
<svg style="left:1017px;top:1041px" width="24" height="24"><circle cx="12" cy="12" r="12" fill="#e33b2e"/><path d="M12 12 1.500 18A12 12 0 0 1 4 3l6 9z" fill="#e33b2e"/><path d="M12 24A12 12 0 0 1 1.600 18L7 9l5 9z" fill="#2fa24f"/><path d="M12 24l6-10-1-6h6.500A12 12 0 0 1 12 24z" fill="#fbc02d"/><circle cx="12" cy="12" r="5.500" fill="#fff"/><circle cx="12" cy="12" r="4.200" fill="#3f7fe8"/></svg>
<div class="b" style="left:1027px;top:1069px;width:5px;height:5px;border-radius:50%;background:#a99bb0"></div>
<svg style="left:1061px;top:1042px" width="24" height="24"><path d="M17.500 0 24 3v18l-6.500 3L6.500 14 2 17.500 0 16.500V7.500L2 6.500 6.500 10z" fill="#1a86d8"/><path d="M17.500 6.500 10.500 12l7 5.500z" fill="#1c2240"/></svg>
<div class="b" style="left:1097px;top:1033px;width:40px;height:40px;border-radius:5px;background:rgba(255,255,255,.07)"></div>
<svg style="left:1105px;top:1041px" width="24" height="25"><path d="M4 2 14 0l3 4 7 5-3 13-6 3H6L1 18z" fill="#2a9ce0"/><path d="M4 2 14 0 8 12 1 18z" fill="#ef4b7a"/><path d="M1 18l7-6 3 13H6z" fill="#f5a623"/><rect x="4" y="3" width="16" height="19" fill="#000"/></svg>
<div class="t" style="left:1107px;top:1043px;font:bold 9.5px/12px 'Liberation Mono',monospace;color:#fff">IJ</div>
<div class="b" style="left:1108px;top:1059px;width:7px;height:1.5px;background:#fff"></div>
<div class="b" style="left:1109px;top:1069px;width:16px;height:3px;border-radius:2px;background:#d6a9e6"></div>
<svg style="left:1149px;top:1042px" width="24" height="22"><path d="M1 10 5 0l7 6zM23 10 19 0l-7 6z" fill="#d8cf8f"/><circle cx="12" cy="13" r="8.500" fill="#e6c94a"/></svg>
<div class="b" style="left:1159px;top:1070px;width:5px;height:5px;border-radius:50%;background:#a99bb0"></div>

<!-- tray -->
<svg style="left:1563px;top:1048px" width="12" height="8" fill="none" stroke="#e8e4ef" stroke-width="1.5"><path d="M1 7l5-5 5 5"/></svg>
<div class="b" style="left:1594px;top:1046px;width:14px;height:14px;border-radius:3px;background:#1e88e5"></div>
<svg style="left:1597px;top:1048px" width="8" height="10"><path d="M1 0l6 5-6 5 2-5z" fill="#fff"/></svg>
<svg style="left:1625px;top:1046px" width="16" height="14"><path d="M2 3l2-3 3 2h2l3-2 2 3v8a2 2 0 0 1-2 2H4a2 2 0 0 1-2-2z" fill="#4a3b6e"/><circle cx="5.500" cy="6" r="2" fill="none" stroke="#cfd4e8"/><circle cx="10.500" cy="6" r="2" fill="none" stroke="#cfd4e8"/></svg>
<svg style="left:1657px;top:1046px" width="17" height="14"><ellipse cx="6" cy="6" rx="6" ry="5.200" fill="#2fc04f"/><ellipse cx="12" cy="9.500" rx="4.500" ry="3.800" fill="#e6e6e6"/></svg>
<div class="t" style="left:1690px;top:1042px;font-size:13px;color:#f2eef5">英</div>
<div class="b" style="left:1728px;top:1046px;width:14px;height:14px;border-radius:3px;background:#e8591c;transform:rotate(-12deg)"></div>
<div class="t" style="left:1731px;top:1041px;font:bold 12px/24px 'Liberation Sans',sans-serif;color:#fff">S</div>
<svg style="left:1764px;top:1044px" width="16" height="17" fill="none" stroke="#ece8f2" stroke-width="1.2"><path d="M10 2H1v10h9M5 12v3M2 15.500h7"/><rect x="11" y="1" width="4" height="7"/><path d="M13 8v5"/></svg>
<svg style="left:1789px;top:1046px" width="17" height="14" fill="none" stroke="#ece8f2" stroke-width="1.1"><path d="M1 5h3l3-3v10L4 9H1zM10 4.500a3.500 3.500 0 0 1 0 5M12.500 3a6 6 0 0 1 0 8M14.800 1.500a8 8 0 0 1 0 11"/></svg>
<div class="t" style="left:1848px;top:1034px;font-size:13px;line-height:20px;color:#f2eef5">15:56</div>
<div class="t" style="left:1821px;top:1051px;font-size:13px;line-height:20px;color:#f2eef5">2024/7/11</div>
<svg style="left:1885px;top:1045px" width="14" height="16"><path d="M7 0C3.500 0 3 3 3 6c0 2.500-1 4-3 6h14c-2-2-3-3.500-3-6 0-3-.5-6-4-6z" fill="#e9c0ef"/><rect x="5" y="13" width="4" height="2.500" rx="1" fill="#e9c0ef"/></svg>

<!-- sogou bar -->
<div class="b" style="left:1745px;top:1003px;width:174px;height:24px;background:#1f2023;opacity:.95"></div>
<div class="b" style="left:1721px;top:1001px;width:26px;height:26px;border-radius:3px;background:#e8591c;transform:rotate(-12deg)"></div>
<div class="t" style="left:1723px;top:1000px;font:italic bold 26px/28px 'Liberation Sans',sans-serif;color:#fff">S</div>
<div class="t" style="left:1756px;top:1004px;font-size:14px;color:#f2f2f2;font-weight:bold">英</div>
<div class="b" style="left:1783px;top:1012px;width:3px;height:3px;border-radius:50%;background:#f0f0f0"></div>
<div class="t" style="left:1788px;top:1002px;font-size:14px;color:#f0f0f0">,</div>
<svg style="left:1804px;top:1006px" width="14" height="18" fill="#e8e8e8"><rect x="4" y="0" width="7" height="11" rx="3.500"/><path d="M1 8a6.500 6.500 0 0 0 13 0M7.500 14v3" fill="none" stroke="#e8e8e8" stroke-width="1.3"/></svg>
<svg style="left:1828px;top:1010px" width="16" height="12" fill="none" stroke="#e8e8e8"><rect x=".5" y=".5" width="15" height="11"/><path d="M3 3.500h10M3 6h10M5 8.500h6" stroke-width="1.4"/></svg>
<svg style="left:1852px;top:1008px" width="16" height="14"><path d="M5 0h6l5 3-2 3-2-1v9H4V5L2 6 0 3z" fill="#e8e8e8"/></svg>
<svg style="left:1876px;top:1009px" width="16" height="12"><rect y="1" width="16" height="10" rx="5" fill="#e8e8e8"/><path d="M4 4v4M2 6h4" stroke="#333"/><circle cx="12" cy="6" r="1.200" fill="#333"/></svg>
<svg style="left:1901px;top:1008px" width="14" height="14" fill="#e8e8e8"><rect width="6" height="6" rx="1.500"/><rect x="8" width="6" height="6" rx="1.500"/><rect y="8" width="6" height="6" rx="1.500"/><rect x="8" y="8" width="6" height="6" rx="1.500"/></svg>

<!-- red annotations -->
<svg width="1919" height="1076" style="left:0;top:0;pointer-events:none">
<path d="M296 346 838 577" stroke="#d91f1c" stroke-width="2" fill="none"/>
<path d="M845 585 830 580 840 568z" fill="#e0201c"/>
<rect x="865" y="569" width="234" height="36" fill="none" stroke="#d3201d" stroke-width="2"/>
</svg>
<div class="t" style="left:1580px;top:1016px;font-size:24.8px;line-height:34px;color:rgba(255,255,255,.72);text-shadow:0 0 2px rgba(0,0,0,.5)">掘金技术社区 @ 云层上的光</div>
</body></html>
